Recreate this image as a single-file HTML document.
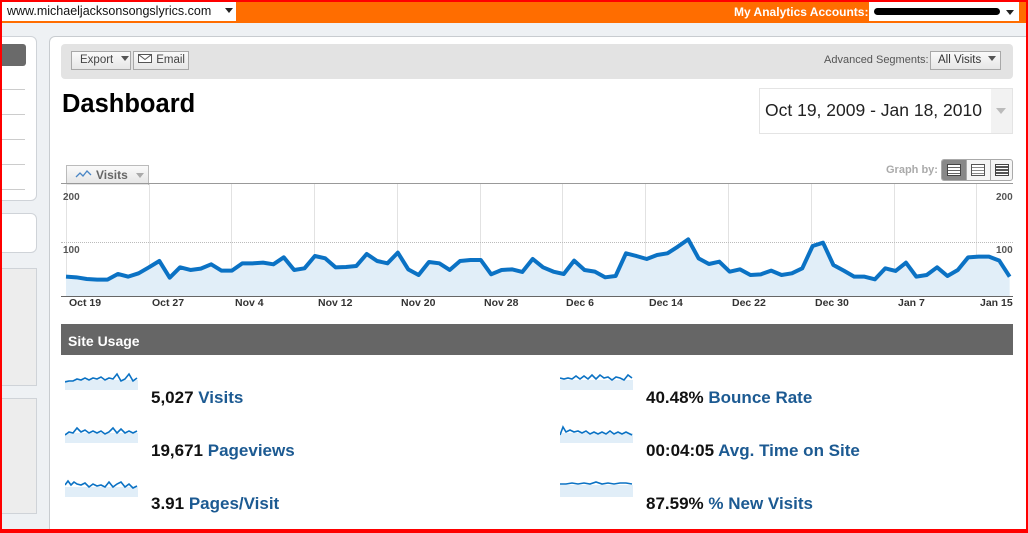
<!DOCTYPE html>
<html style="width:1028px;height:533px;overflow:hidden"><head><meta charset="utf-8">
<style>
*{margin:0;padding:0;box-sizing:border-box}
body{width:1028px;height:533px;overflow:hidden;background:#eef1f4;font-family:"Liberation Sans",Arial,sans-serif;position:relative}
.abs{position:absolute}
.frame{position:absolute;left:0;top:0;width:1028px;height:533px;border:2px solid #f00;border-bottom:4px solid #f00;z-index:50;pointer-events:none}
.top{left:0;top:0;width:1028px;height:23px;background:#ff6d00}
.site{left:2px;top:2px;width:234px;height:19px;background:#fff;font-size:12.5px;line-height:19px;padding-left:5px;color:#111;white-space:nowrap}
.tri{display:inline-block;width:0;height:0;border-left:4px solid transparent;border-right:4px solid transparent;border-top:5px solid #222}
.btn{background:linear-gradient(#fafafa,#e6e6e6);border:1px solid #a8a8a8;font-size:11.5px;color:#444;height:19px;line-height:17px;white-space:nowrap}
.spark{position:absolute;width:73px;height:18px}
.num{position:absolute;font-size:17px;font-weight:bold;color:#111;white-space:nowrap}
.num span{color:#1c5a92}
.xl{position:absolute;top:297px;font-size:10.5px;font-weight:bold;color:#333}
.vg{position:absolute;top:184px;width:1px;height:112px;background:#e2e2e2}
</style></head><body>
<div class="frame"></div>
<div class="abs top"></div>
<div class="abs site">www.michaeljacksonsongslyrics.com <span class="tri" style="margin-left:10px;vertical-align:2px"></span></div>
<div class="abs" style="left:734px;top:5px;font-size:12px;font-weight:bold;color:#fff">My Analytics Accounts:</div>
<div class="abs" style="left:869px;top:2px;width:150px;height:19px;background:#fff"></div>
<div class="abs" style="left:874px;top:8px;width:126px;height:7px;background:#000;border-radius:4px"></div>
<span class="abs tri" style="left:1006px;top:10px"></span>

<div class="abs" style="left:0;top:36px;width:37px;height:165px;background:#fff;border:1px solid #cfd3d8;border-radius:0 6px 6px 0"></div>
<div class="abs" style="left:0;top:44px;width:26px;height:22px;background:#6a6a6a;border-radius:0 3px 3px 0"></div>
<div class="abs" style="left:0;top:89px;width:25px;height:1px;background:#ccc"></div>
<div class="abs" style="left:0;top:114px;width:25px;height:1px;background:#ccc"></div>
<div class="abs" style="left:0;top:139px;width:25px;height:1px;background:#ccc"></div>
<div class="abs" style="left:0;top:164px;width:25px;height:1px;background:#ccc"></div>
<div class="abs" style="left:0;top:189px;width:25px;height:1px;background:#ccc"></div>
<div class="abs" style="left:0;top:213px;width:37px;height:40px;background:#fff;border:1px solid #cfd3d8;border-radius:0 6px 6px 0"></div>
<div class="abs" style="left:0;top:268px;width:37px;height:118px;background:#ededed;border:1px solid #cfd3d8"></div>
<div class="abs" style="left:0;top:398px;width:37px;height:116px;background:#ededed;border:1px solid #cfd3d8"></div>

<div class="abs" style="left:49px;top:36px;width:990px;height:497px;background:#fff;border:1px solid #c8ccd0;border-bottom:none;border-radius:6px 6px 0 0"></div>
<div class="abs" style="left:61px;top:44px;width:952px;height:35px;background:#e3e3e3;border-radius:4px"></div>
<div class="abs btn" style="left:71px;top:51px;width:60px;padding-left:8px">Export <span class="tri" style="border-top-color:#555;margin-left:5px;vertical-align:2px"></span></div>
<div class="abs btn" style="left:133px;top:51px;width:56px;padding-left:4px">
<svg width="15" height="10" style="vertical-align:-1px"><rect x="0.5" y="0.5" width="13" height="8" fill="#fff" stroke="#555"/><path d="M0.5 0.5 L7 5.5 L13.5 0.5" fill="none" stroke="#555"/></svg> Email</div>
<div class="abs" style="left:824px;top:54px;font-size:11px;color:#555;white-space:nowrap">Advanced Segments:</div>
<div class="abs btn" style="left:930px;top:51px;width:71px;padding-left:7px;color:#333">All Visits <span class="tri" style="border-top-color:#555;margin-left:4px;vertical-align:2px"></span></div>

<div class="abs" style="left:62px;top:90px;font-size:25.5px;font-weight:bold;color:#000">Dashboard</div>
<div class="abs" style="left:759px;top:88px;width:254px;height:46px;border:1px solid #e4e4e4;background:#fff"></div>
<div class="abs" style="left:991px;top:89px;width:21px;height:44px;background:#f2f2f2"></div>
<span class="abs tri" style="left:996px;top:108px;border-top-color:#bbb;border-left-width:5px;border-right-width:5px;border-top-width:6px"></span>
<div class="abs" style="left:765px;top:100px;font-size:17.5px;color:#222;white-space:nowrap">Oct 19, 2009 - Jan 18, 2010</div>

<div class="abs" style="left:66px;top:165px;width:83px;height:20px;background:linear-gradient(#fafafa,#e4e4e4);border:1px solid #bbb;border-bottom:none"></div>
<svg class="abs" style="left:75px;top:169px" width="18" height="10"><path d="M1 8 L5 4 L8 7 L12 2 L16 6" fill="none" stroke="#4a86c5" stroke-width="1.3"/></svg>
<div class="abs" style="left:96px;top:168px;font-size:12px;font-weight:bold;color:#666">Visits</div>
<span class="abs tri" style="left:136px;top:173px;border-top-color:#aaa"></span>
<div class="abs" style="left:886px;top:164px;font-size:11px;font-weight:bold;color:#aaa">Graph by:</div>
<div class="abs" style="left:941px;top:159px;width:72px;height:22px;border:1px solid #aaa;border-radius:3px;background:#f5f5f5;overflow:hidden">
<div style="position:absolute;left:0;top:0;width:24px;height:22px;background:#888"></div>
<div style="position:absolute;left:24px;top:0;width:1px;height:22px;background:#aaa"></div>
<div style="position:absolute;left:48px;top:0;width:1px;height:22px;background:#aaa"></div>
<div style="position:absolute;left:5px;top:4px;width:14px;height:12px;border:1px solid #444;background:repeating-linear-gradient(#fff 0 2px,#666 2px 3px)"></div>
<div style="position:absolute;left:29px;top:4px;width:14px;height:12px;border:1px solid #555;background:repeating-linear-gradient(#fff 0 2px,#888 2px 3px)"></div>
<div style="position:absolute;left:53px;top:4px;width:14px;height:12px;border:1px solid #444;background:repeating-linear-gradient(#fff 0 1px,#555 1px 3px)"></div>
</div>

<div class="abs" style="left:61px;top:183px;width:952px;height:1px;background:#999"></div>
<div class="vg" style="left:66px"></div><div class="vg" style="left:149px"></div><div class="vg" style="left:231px"></div><div class="vg" style="left:314px"></div><div class="vg" style="left:397px"></div><div class="vg" style="left:480px"></div><div class="vg" style="left:562px"></div><div class="vg" style="left:645px"></div><div class="vg" style="left:728px"></div><div class="vg" style="left:811px"></div><div class="vg" style="left:894px"></div><div class="vg" style="left:976px"></div>
<div class="abs" style="left:61px;top:242px;width:952px;border-top:1px dotted #bbb"></div>
<div class="abs" style="left:63px;top:192px;font-size:10px;font-weight:bold;color:#555">200</div>
<div class="abs" style="left:63px;top:245px;font-size:10px;font-weight:bold;color:#555">100</div>
<div class="abs" style="left:996px;top:192px;font-size:10px;font-weight:bold;color:#555">200</div>
<div class="abs" style="left:996px;top:245px;font-size:10px;font-weight:bold;color:#555">100</div>
<svg class="abs" style="left:0;top:0" width="1028" height="533">
<g transform="translate(66,180) scale(10.37,0.3333)">
<polygon fill="#e1eef8" points="0,348 0,290 1,292 2,297 3,299 4,299 5,282 6,290 7,280 8,262 9,243 10,293 11,262 12,270 13,266 14,253 15,272 16,272 17,250 18,250 19,248 20,253 21,232 22,270 23,265 24,228 25,235 26,262 27,261 28,258 29,222 30,243 31,250 32,218 33,268 34,285 35,246 36,250 37,270 38,243 39,240 40,240 41,283 42,270 43,268 44,276 45,237 46,262 47,275 48,282 49,242 50,270 51,275 52,292 53,288 54,220 55,228 56,237 57,225 58,220 59,200 60,178 61,235 62,252 63,245 64,275 65,268 66,285 67,283 68,272 69,285 70,280 71,265 72,198 73,188 74,255 75,272 76,290 77,290 78,298 79,265 80,273 81,248 82,290 83,285 84,262 85,288 86,270 87,232 88,230 89,230 90,242 91,290 91,348"/>
<polyline fill="none" stroke="#0b72c4" stroke-width="4" stroke-linejoin="round" vector-effect="non-scaling-stroke" points="0,290 1,292 2,297 3,299 4,299 5,282 6,290 7,280 8,262 9,243 10,293 11,262 12,270 13,266 14,253 15,272 16,272 17,250 18,250 19,248 20,253 21,232 22,270 23,265 24,228 25,235 26,262 27,261 28,258 29,222 30,243 31,250 32,218 33,268 34,285 35,246 36,250 37,270 38,243 39,240 40,240 41,283 42,270 43,268 44,276 45,237 46,262 47,275 48,282 49,242 50,270 51,275 52,292 53,288 54,220 55,228 56,237 57,225 58,220 59,200 60,178 61,235 62,252 63,245 64,275 65,268 66,285 67,283 68,272 69,285 70,280 71,265 72,198 73,188 74,255 75,272 76,290 77,290 78,298 79,265 80,273 81,248 82,290 83,285 84,262 85,288 86,270 87,232 88,230 89,230 90,242 91,290"/>
</g>
</svg>
<div class="abs" style="left:61px;top:296px;width:952px;height:1px;background:#666"></div>
<div class="xl" style="left:69px">Oct 19</div><div class="xl" style="left:152px">Oct 27</div><div class="xl" style="left:235px">Nov 4</div><div class="xl" style="left:318px">Nov 12</div><div class="xl" style="left:401px">Nov 20</div><div class="xl" style="left:484px">Nov 28</div><div class="xl" style="left:566px">Dec 6</div><div class="xl" style="left:649px">Dec 14</div><div class="xl" style="left:732px">Dec 22</div><div class="xl" style="left:815px">Dec 30</div><div class="xl" style="left:898px">Jan 7</div><div class="xl" style="left:980px">Jan 15</div>

<div class="abs" style="left:61px;top:324px;width:952px;height:31px;background:#666"></div>
<div class="abs" style="left:68px;top:333px;font-size:14px;font-weight:bold;color:#fff">Site Usage</div>

<svg class="spark" style="left:65px;top:372px"><rect x="0" y="8" width="73" height="10" fill="#e1eef8"/><polyline fill="none" stroke="#0b72c4" stroke-width="1.6" points="0,10 4,9 8,9 12,7 16,8 20,6 24,8 28,6 32,7 36,5 40,8 44,6 48,7 52,2 56,9 60,7 64,2 68,9 72,6"/></svg>
<svg class="spark" style="left:65px;top:425px"><rect x="0" y="8" width="73" height="10" fill="#e1eef8"/><polyline fill="none" stroke="#0b72c4" stroke-width="1.6" points="0,10 4,7 8,8 12,3 16,7 20,5 24,8 28,6 32,8 36,6 40,9 44,7 48,3 52,8 56,4 60,8 64,6 68,8 72,6"/></svg>
<svg class="spark" style="left:65px;top:479px"><rect x="0" y="8" width="73" height="10" fill="#e1eef8"/><polyline fill="none" stroke="#0b72c4" stroke-width="1.6" points="0,6 3,2 6,6 9,3 12,5 16,6 20,4 24,8 28,5 32,7 36,6 40,8 44,3 48,8 52,5 56,3 60,8 64,5 68,9 72,7"/></svg>
<svg class="spark" style="left:560px;top:372px"><rect x="0" y="8" width="73" height="10" fill="#e1eef8"/><polyline fill="none" stroke="#0b72c4" stroke-width="1.6" points="0,6 4,7 8,6 12,7 16,4 20,7 24,4 28,7 32,3 36,7 40,3 44,6 48,5 52,8 56,5 60,6 64,8 68,3 72,6"/></svg>
<svg class="spark" style="left:560px;top:425px"><rect x="0" y="8" width="73" height="10" fill="#e1eef8"/><polyline fill="none" stroke="#0b72c4" stroke-width="1.6" points="0,10 3,2 6,7 10,5 14,7 18,6 22,8 26,6 30,9 34,7 38,9 42,7 46,9 50,6 54,9 58,7 62,9 66,7 72,10"/></svg>
<svg class="spark" style="left:560px;top:479px"><rect x="0" y="6" width="73" height="12" fill="#e1eef8"/><polyline fill="none" stroke="#0b72c4" stroke-width="1.6" points="0,5 6,5 12,4 18,5 24,4 30,5 36,3 42,5 48,4 54,5 60,4 66,4 72,5"/></svg>

<div class="num" style="left:151px;top:388px">5,027 <span>Visits</span></div>
<div class="num" style="left:151px;top:441px">19,671 <span>Pageviews</span></div>
<div class="num" style="left:151px;top:494px">3.91 <span>Pages/Visit</span></div>
<div class="num" style="left:646px;top:388px">40.48% <span>Bounce Rate</span></div>
<div class="num" style="left:646px;top:441px">00:04:05 <span>Avg. Time on Site</span></div>
<div class="num" style="left:646px;top:494px">87.59% <span>% New Visits</span></div>
</body></html>
